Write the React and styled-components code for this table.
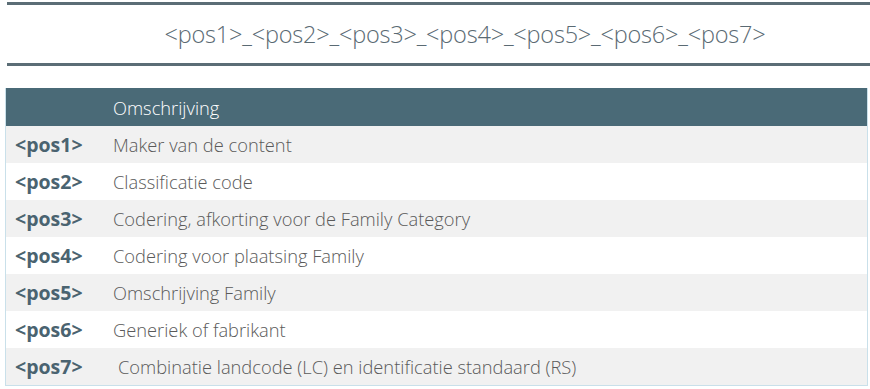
import styled, { createGlobalStyle } from 'styled-components'

const GlobalStyle = createGlobalStyle`
body {
  margin: 0;
  background: #ffffff;
  font-family: "Open Sans", "Liberation Sans", sans-serif;
}
`

const Page = styled.div`
width: 870px;
height: 389px;
overflow: hidden;
display: flex;
flex-direction: column;
`

const Banner = styled.div`
margin: 2px 0 0 7px;
height: 58px;
border-top: 3px solid #5b6d76;
border-bottom: 3px solid #5b6d76;
display: flex;
align-items: center;
justify-content: center;
padding-left: 53px;
font-size: 23.5px;
font-weight: 300;
color: #5a6a73;
letter-spacing: -0.2px;
`

const Table = styled.div`
margin: 22px 0 0 5px;
width: 861px;
border: 1px solid #c9e0ea;
border-top: none;
`

const Row = styled.div`
display: grid;
grid-template-columns: 107px 1fr;
align-items: center;
height: ${p => (p.head ? 38 : 37)}px;
background: ${p => (p.head ? '#4a6a77' : p.shade ? '#f1f1f1' : '#ffffff')};
`

const Key = styled.div`
padding-left: 9px;
font-size: 19.5px;
font-weight: 700;
color: #4a6370;
letter-spacing: 0;
`

const Desc = styled.div`
padding-left: ${p => p.indent || 0}px;
font-size: 18.3px;
font-weight: 300;
color: ${p => (p.head ? '#ffffff' : '#5a5a5a')};
letter-spacing: 0;
`

const rows = [
  ['<pos1>', 'Maker van de content'],
  ['<pos2>', 'Classificatie code'],
  ['<pos3>', 'Codering, afkorting voor de Family Category'],
  ['<pos4>', 'Codering voor plaatsing Family'],
  ['<pos5>', 'Omschrijving Family'],
  ['<pos6>', 'Generiek of fabrikant'],
  ['<pos7>', 'Combinatie landcode (LC) en identificatie standaard (RS)', 5],
]

export default function App() {
  return (
    <Page>
      <GlobalStyle />
      <Banner>&lt;pos1&gt;_&lt;pos2&gt;_&lt;pos3&gt;_&lt;pos4&gt;_&lt;pos5&gt;_&lt;pos6&gt;_&lt;pos7&gt;</Banner>
      <Table>
        <Row head>
          <Key />
          <Desc head>Omschrijving</Desc>
        </Row>
        {rows.map(([k, d, indent], i) => (
          <Row key={k} shade={i % 2 === 0}>
            <Key>{k}</Key>
            <Desc indent={indent}>{d}</Desc>
          </Row>
        ))}
      </Table>
    </Page>
  )
}
